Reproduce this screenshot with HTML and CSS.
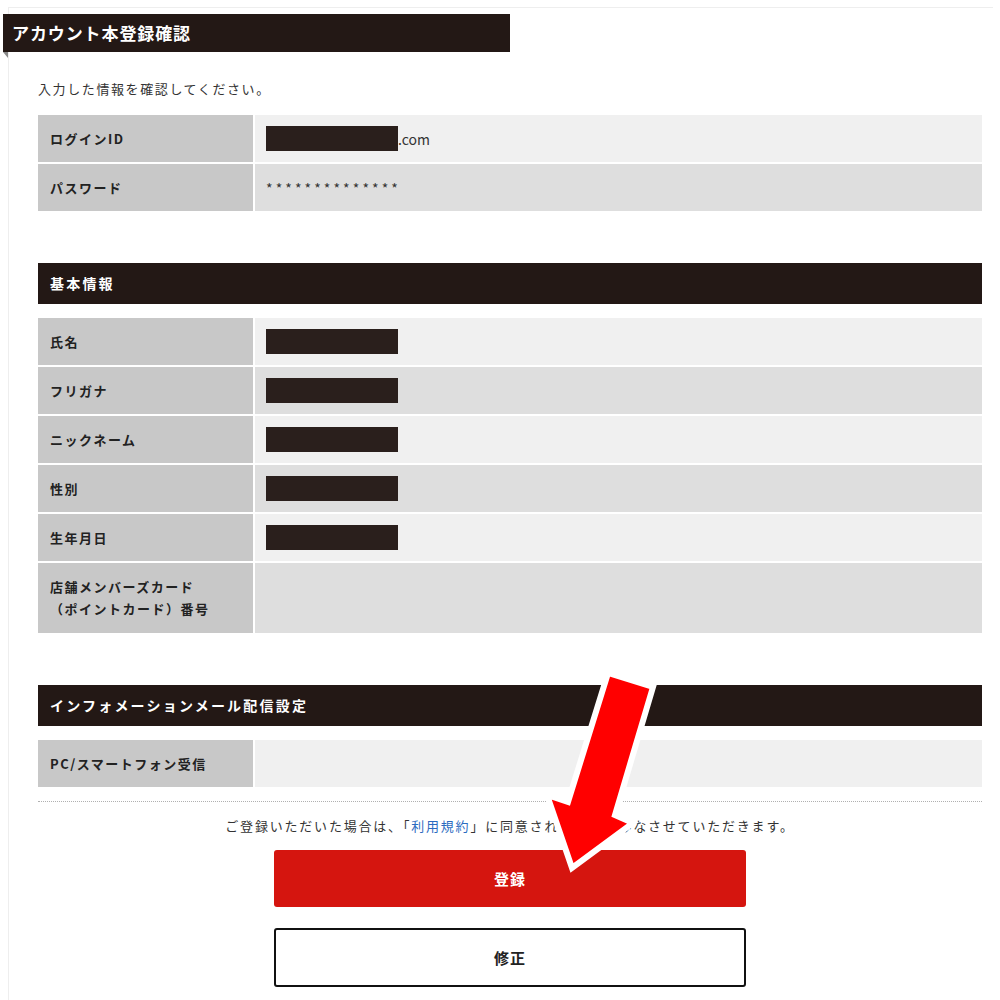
FILE: index.html
```html
<!DOCTYPE html>
<html lang="ja">

<head>
    <meta charset="UTF-8">
    <meta name="viewport" content="width=device-width, initial-scale=1.0">
    <title>アカウント本登録確認</title>
    <link rel="stylesheet" href="styles.css">
</head>

<body>
    <div class="card">
        <h1 class="page-title">アカウント本登録確認</h1>
        <p class="intro">入力した情報を確認してください。</p>

        <div class="info-table">
            <div class="label">ログインID</div>
            <div class="value"><span class="masked"></span>.com</div>
            <div class="label">パスワード</div>
            <div class="value password">**************</div>
        </div>

        <h2 class="section-title">基本情報</h2>
        <div class="info-table">
            <div class="label">氏名</div>
            <div class="value"><span class="masked"></span></div>
            <div class="label">フリガナ</div>
            <div class="value"><span class="masked"></span></div>
            <div class="label">ニックネーム</div>
            <div class="value"><span class="masked"></span></div>
            <div class="label">性別</div>
            <div class="value"><span class="masked"></span></div>
            <div class="label">生年月日</div>
            <div class="value"><span class="masked"></span></div>
            <div class="label tall">店舗メンバーズカード<br>（ポイントカード）番号</div>
            <div class="value"></div>
        </div>

        <h2 class="section-title">インフォメーションメール配信設定</h2>
        <div class="info-table">
            <div class="label">PC/スマートフォン受信</div>
            <div class="value"></div>
        </div>

        <div class="agree">
            <p>ご登録いただいた場合は、「<a href="#">利用規約</a>」に同意されたものとみなさせていただきます。</p>
            <button class="btn btn-submit">登録</button>
            <button class="btn btn-back">修正</button>
        </div>
    </div>

    <!-- annotation arrow over the screenshot -->
    <svg class="arrow" width="1000" height="1000" viewBox="0 0 1000 1000">
        <polygon points="608,673 653,687 615,815 633,823 572,868 547,795 568,802"
                 fill="#ff0000" stroke="#ffffff" stroke-width="6" stroke-linejoin="miter"/>
    </svg>
</body>

</html>
```

FILE: styles.css
```css
/* Global settings */
*, *::before, *::after {
    box-sizing: border-box;
}

html,
body {
    margin: 0;
    padding: 0;
    background: #fff;
}

body {
    position: relative;
    width: 1000px;
    height: 1000px;
    overflow: hidden;
    padding-top: 7px;
    font-family: "Noto Sans CJK JP", "Noto Sans", sans-serif;
    color: #333;
}

.card {
    margin: 0 7px 0 8px;
    padding: 0 11px 0 29px;
    border-top: 1px solid #eee;
    border-left: 1px solid #eee;
    height: 1000px;
}

.page-title {
    position: relative;
    margin: 6px 0 0 -35px;
    width: 507px;
    height: 38px;
    padding-left: 9px;
    background: #231815;
    color: #fff;
    font-size: 17px;
    line-height: 38px;
    letter-spacing: 0.9px;
    font-weight: bold;
}

.page-title::after {
    content: "";
    position: absolute;
    left: 0;
    top: 100%;
    width: 0;
    height: 0;
    border-top: 6px solid #8a8a8a;
    border-left: 5px solid transparent;
}

.intro {
    margin: 27px 0 0;
    font-size: 13px;
    line-height: 20px;
    letter-spacing: 1.6px;
}

.info-table {
    display: grid;
    grid-template-columns: 215px 1fr;
    gap: 2px;
    margin-top: 16px;
}

.label {
    display: flex;
    align-items: center;
    min-height: 47px;
    padding: 0 12px;
    background: #c8c8c8;
    color: #222;
    font-size: 13px;
    font-weight: bold;
    letter-spacing: 1.5px;
}

.label.tall {
    min-height: 70px;
    line-height: 22px;
}

.value {
    display: flex;
    align-items: center;
    padding: 0 11px;
    background: #f0f0f0;
    font-size: 14px;
    color: #333;
}

.info-table .value:nth-child(4n) {
    background: #dedede;
}

.masked {
    display: inline-block;
    width: 132px;
    height: 25px;
    background: #2a1f1c;
}

.password {
    font-size: 14px;
    letter-spacing: 3.1px;
}

.section-title {
    margin: 52px 0 0;
    height: 41px;
    padding-left: 12px;
    background: #231815;
    color: #fff;
    font-size: 14px;
    line-height: 41px;
    letter-spacing: 2.2px;
    font-weight: bold;
}

.section-title + .info-table {
    margin-top: 14px;
}

.agree {
    margin-top: 14px;
    border-top: 1px dotted #b0b0b0;
    display: flex;
    flex-direction: column;
    align-items: center;
}

.agree p {
    margin: 14px 0 0;
    font-size: 13px;
    line-height: 20px;
    letter-spacing: 1.8px;
    color: #333;
    text-align: center;
}

.agree a {
    color: #2b6bbf;
    text-decoration: none;
}

.btn {
    width: 472px;
    border-radius: 3px;
    font-family: inherit;
    font-size: 15px;
    font-weight: bold;
    letter-spacing: 1px;
    cursor: pointer;
}

.btn-submit {
    margin-top: 14px;
    height: 57px;
    border: none;
    background: #d5150f;
    color: #fff;
}

.btn-back {
    margin-top: 21px;
    height: 59px;
    border: 2px solid #111;
    background: #fff;
    color: #222;
}

.arrow {
    position: absolute;
    left: 0;
    top: 0;
    pointer-events: none;
}
```
